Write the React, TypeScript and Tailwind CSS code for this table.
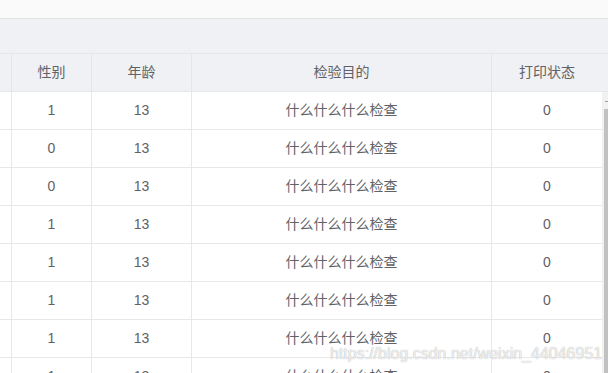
import React from "react";

const rows = [1, 0, 0, 1, 1, 1, 1, 1].map((sex) => ({
  sex,
  age: 13,
  purpose: "什么什么什么检查",
  printed: 0,
}));

const font = "font-['Liberation_Sans','Noto_Sans_CJK_SC',sans-serif]";

export default function App() {
  return (
    <div className={`relative w-[608px] h-[373px] overflow-hidden bg-white ${font} text-[14px] text-[#606266]`}>
      {/* top strip */}
      <div className="h-[19px] bg-[#fafafa] border-b border-[#e2e2e2]" />
      {/* toolbar band */}
      <div className="h-[34px] bg-[#f0f1f4]" />

      {/* header */}
      <div className="flex h-[39px] bg-[#f0f1f4] border-t border-b border-[#e4e6ea]">
        <div className="w-[12px] border-r border-[#e4e6ea]" />
        <div className="w-[80px] border-r border-[#e4e6ea] flex items-center justify-center">性别</div>
        <div className="w-[100px] border-r border-[#e4e6ea] flex items-center justify-center">年龄</div>
        <div className="w-[300px] border-r border-[#e4e6ea] flex items-center justify-center">检验目的</div>
        <div className="w-[110px] flex items-center justify-center">打印状态</div>
        <div className="w-[6px]" />
      </div>

      {/* body */}
      <div className="flex">
        <div className="w-[602px]">
          {rows.map((r, i) => (
            <div key={i} className="flex h-[38px] border-b border-[#e8e8e8]">
              <div className="w-[12px] border-r border-[#e8e8e8]" />
              <div className="w-[80px] border-r border-[#e8e8e8] flex items-center justify-center">{r.sex}</div>
              <div className="w-[100px] border-r border-[#e8e8e8] flex items-center justify-center">{r.age}</div>
              <div className="w-[300px] border-r border-[#e8e8e8] flex items-center justify-center">{r.purpose}</div>
              <div className="flex-1 flex items-center justify-center">{r.printed}</div>
            </div>
          ))}
        </div>
        {/* scrollbar */}
        <div className="w-[6px] bg-[#f1f1f1] flex flex-col">
          <div className="h-[17px] flex items-start justify-end pt-[9px]">
            <div className="w-[3px] h-[1px] bg-[#a0a0a0]" />
          </div>
          <div className="ml-[2px] flex-1 h-[300px] bg-[#c1c1c1]" />
        </div>
      </div>

      {/* watermark */}
      <div className="absolute left-[330px] top-[342px] text-[16px] text-white/80 [text-shadow:0_0_1px_#9a9a9a] font-['Liberation_Sans',sans-serif] whitespace-nowrap">
        https://blog.csdn.net/weixin_44046951
      </div>
    </div>
  );
}
